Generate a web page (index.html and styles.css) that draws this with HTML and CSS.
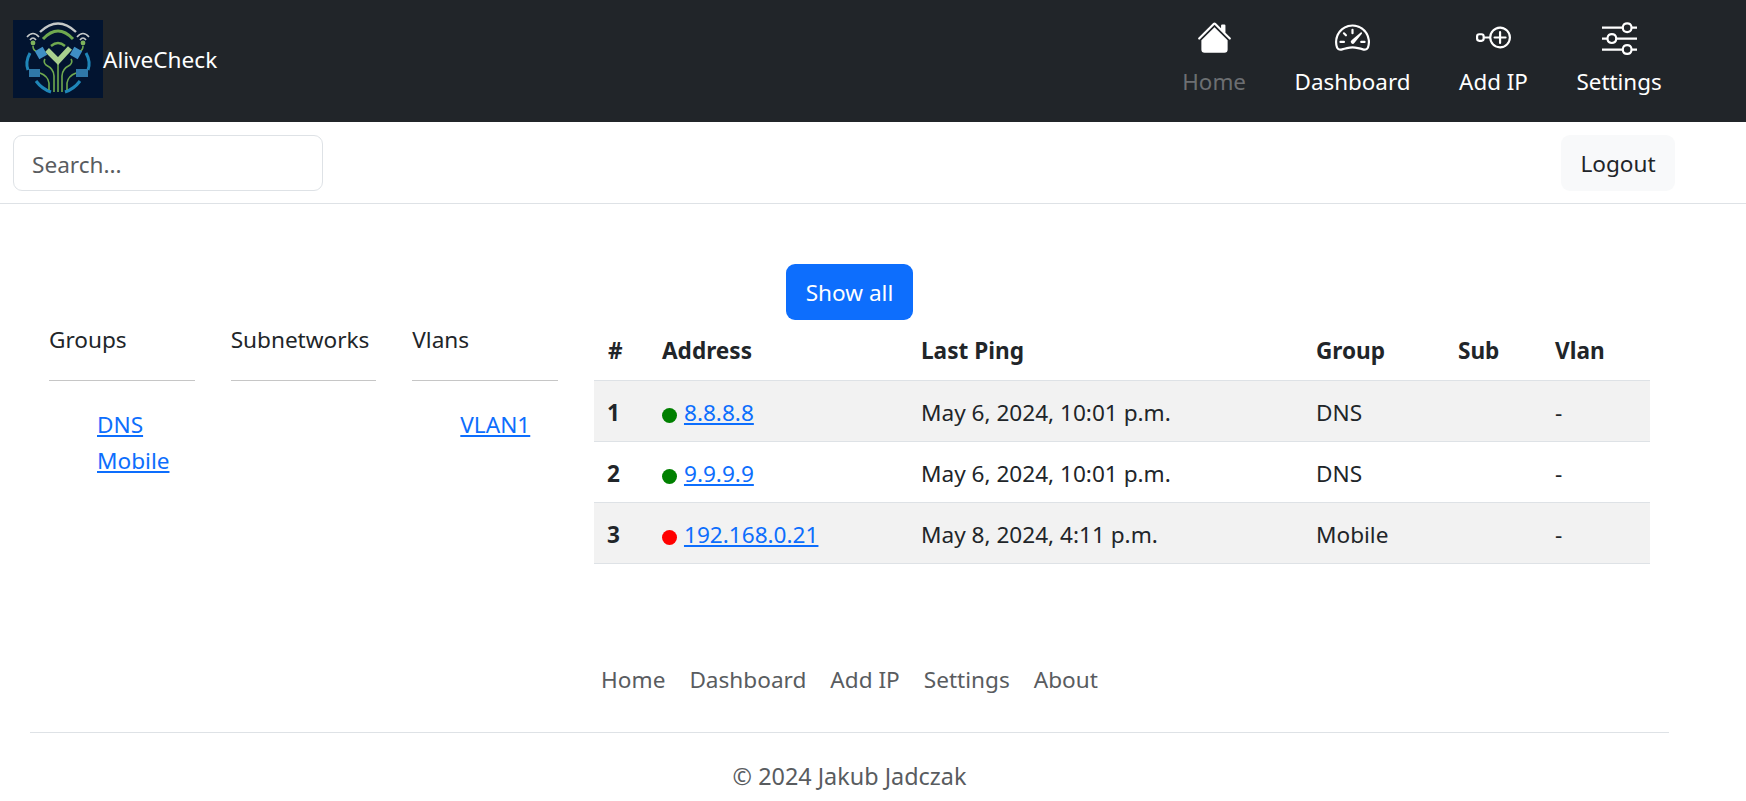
FILE: index.html
```html
<!DOCTYPE html>
<html lang="en">
<head>
    <meta charset="UTF-8">
    <title>AliveCheck</title>
    <link rel="stylesheet" href="styles.css">
</head>
<body>
    <header class="navbar">
        <a class="brand" href="#">
            <svg class="brand-logo" viewBox="0 0 90 78">
                <rect width="90" height="78" fill="#021430"/>
                <!-- top arcs -->
                <path d="M27 12 Q45 -5 63 12" fill="none" stroke="#c4c8c8" stroke-width="2.4"/>
                <path d="M30 19 Q45 3 60 19" fill="none" stroke="#6fa84f" stroke-width="3"/>
                <path d="M38 26 Q45 20 52 26" fill="none" stroke="#6fa84f" stroke-width="2.4"/>
                <!-- side wifi -->
                <path d="M14 17 Q20 10 26 17 M17 20 Q20 16 23 20 M64 17 Q70 10 76 17 M67 20 Q70 16 73 20" fill="none" stroke="#c4c8c8" stroke-width="1.6"/>
                <circle cx="20" cy="23" r="2.4" fill="#7fb35c"/>
                <circle cx="70" cy="23" r="2.4" fill="#7fb35c"/>
                <!-- ring -->
                <path d="M17 33 Q12 42 15 50 M23 61 Q29 69 38 72 M73 33 Q78 42 75 50 M67 61 Q61 69 52 72" fill="none" stroke="#1f86b8" stroke-width="3"/>
                <!-- circuit stems -->
                <path d="M45 44 V72 M41 72 V56 Q41 49 33 45 Q30 42 32 39 M49 72 V56 Q49 49 57 45 Q60 42 58 39 M36 70 V63 Q35 56 27 53 M54 70 V63 Q55 56 63 53 M20 26 Q20 30 23 31 M70 26 Q70 30 67 31" fill="none" stroke="#6fa84f" stroke-width="1.6"/>
                <!-- check -->
                <path d="M34 30 L45 41 L57 28" fill="none" stroke="#a9d08e" stroke-width="5.5"/>
                <!-- chips -->
                <rect x="23.5" y="28.5" width="9" height="9" fill="#3f8fc4" transform="rotate(-30 28 33)"/>
                <rect x="58.5" y="28.5" width="9" height="9" fill="#3f8fc4" transform="rotate(30 63 33)"/>
                <rect x="16" y="49" width="11" height="8" fill="#2f78a8"/>
                <rect x="63" y="49" width="12" height="8" fill="#2f78a8"/>
            </svg>
            <span>AliveCheck</span>
        </a>
        <nav class="nav-icons">
            <a class="nav-item active" href="#">
                <svg viewBox="0 0 16 16" fill="currentColor" class="icon-white"><path d="M8.707 1.5a1 1 0 0 0-1.414 0L.646 8.146a.5.5 0 0 0 .708.708L8 2.207l6.646 6.647a.5.5 0 0 0 .708-.708L13 5.793V2.5a.5.5 0 0 0-.5-.5h-1a.5.5 0 0 0-.5.5v1.293L8.707 1.5Z"/><path d="m8 3.293 6 6V13.5a1.5 1.5 0 0 1-1.5 1.5h-9A1.5 1.5 0 0 1 2 13.5V9.293l6-6Z"/></svg>
                <span>Home</span>
            </a>
            <a class="nav-item" href="#">
                <svg viewBox="0 0 16 16" fill="currentColor"><path d="M8 4a.5.5 0 0 1 .5.5V6a.5.5 0 0 1-1 0V4.5A.5.5 0 0 1 8 4zM3.732 5.732a.5.5 0 0 1 .707 0l.915.914a.5.5 0 1 1-.708.708l-.914-.915a.5.5 0 0 1 0-.707zM2 10a.5.5 0 0 1 .5-.5h1.586a.5.5 0 0 1 0 1H2.5A.5.5 0 0 1 2 10zm9.5 0a.5.5 0 0 1 .5-.5h1.5a.5.5 0 0 1 0 1H12a.5.5 0 0 1-.5-.5zm.754-4.246a.389.389 0 0 0-.527-.02L7.547 9.31a.91.91 0 1 0 1.302 1.258l3.434-4.297a.389.389 0 0 0-.029-.518z"/><path fill-rule="evenodd" d="M0 10a8 8 0 1 1 15.547 2.661c-.442 1.253-1.845 1.602-2.932 1.25C11.309 13.488 9.475 13 8 13c-1.474 0-3.31.488-4.615.911-1.087.352-2.49.003-2.932-1.25A7.988 7.988 0 0 1 0 10zm8-7a7 7 0 0 0-6.603 9.329c.203.575.923.876 1.68.63C4.397 12.533 6.358 12 8 12s3.604.532 4.923.96c.757.245 1.477-.056 1.68-.631A7 7 0 0 0 8 3z"/></svg>
                <span>Dashboard</span>
            </a>
            <a class="nav-item" href="#">
                <svg viewBox="0 0 16 16" fill="currentColor"><path fill-rule="evenodd" d="M11 4a4 4 0 1 0 0 8 4 4 0 0 0 0-8zM6.025 7.5a5 5 0 1 1 0 1H4A1.5 1.5 0 0 1 2.5 10h-1A1.5 1.5 0 0 1 0 8.5v-1A1.5 1.5 0 0 1 1.5 6h1A1.5 1.5 0 0 1 4 7.5h2.025zM11 5a.5.5 0 0 1 .5.5v2h2a.5.5 0 0 1 0 1h-2v2a.5.5 0 0 1-1 0v-2h-2a.5.5 0 0 1 0-1h2v-2A.5.5 0 0 1 11 5zM1.5 7a.5.5 0 0 0-.5.5v1a.5.5 0 0 0 .5.5h1a.5.5 0 0 0 .5-.5v-1a.5.5 0 0 0-.5-.5h-1z"/></svg>
                <span>Add IP</span>
            </a>
            <a class="nav-item" href="#">
                <svg viewBox="0 0 16 16" fill="currentColor"><path fill-rule="evenodd" d="M11.5 2a1.5 1.5 0 1 0 0 3 1.5 1.5 0 0 0 0-3zM9.05 3a2.5 2.5 0 0 1 4.9 0H16v1h-2.05a2.5 2.5 0 0 1-4.9 0H0V3h9.05zM4.5 7a1.5 1.5 0 1 0 0 3 1.5 1.5 0 0 0 0-3zM2.05 8a2.5 2.5 0 0 1 4.9 0H16v1H6.95a2.5 2.5 0 0 1-4.9 0H0V8h2.05zm9.45 4a1.5 1.5 0 1 0 0 3 1.5 1.5 0 0 0 0-3zm-2.45 1a2.5 2.5 0 0 1 4.9 0H16v1h-2.05a2.5 2.5 0 0 1-4.9 0H0v-1h9.05z"/></svg>
                <span>Settings</span>
            </a>
        </nav>
    </header>

    <div class="toolbar">
        <input class="search" type="text" placeholder="Search...">
        <button class="logout" type="button">Logout</button>
    </div>

    <main class="content">
        <div class="show-row">
            <button class="show-all" type="button">Show all</button>
        </div>
        <div class="columns">
            <section class="side-col">
                <h2>Groups</h2>
                <ul>
                    <li><a href="#">DNS</a></li>
                    <li><a href="#">Mobile</a></li>
                </ul>
            </section>
            <section class="side-col">
                <h2>Subnetworks</h2>
                <ul></ul>
            </section>
            <section class="side-col">
                <h2>Vlans</h2>
                <ul>
                    <li><a href="#">VLAN1</a></li>
                </ul>
            </section>
            <table class="hosts">
                <thead>
                    <tr>
                        <th class="col-num">#</th>
                        <th class="col-address">Address</th>
                        <th class="col-ping">Last Ping</th>
                        <th class="col-group">Group</th>
                        <th class="col-sub">Sub</th>
                        <th>Vlan</th>
                    </tr>
                </thead>
                <tbody>
                    <tr>
                        <th>1</th>
                        <td><span class="dot up"></span><a href="#">8.8.8.8</a></td>
                        <td>May 6, 2024, 10:01 p.m.</td>
                        <td>DNS</td>
                        <td></td>
                        <td>-</td>
                    </tr>
                    <tr>
                        <th>2</th>
                        <td><span class="dot up"></span><a href="#">9.9.9.9</a></td>
                        <td>May 6, 2024, 10:01 p.m.</td>
                        <td>DNS</td>
                        <td></td>
                        <td>-</td>
                    </tr>
                    <tr>
                        <th>3</th>
                        <td><span class="dot down"></span><a href="#">192.168.0.21</a></td>
                        <td>May 8, 2024, 4:11 p.m.</td>
                        <td>Mobile</td>
                        <td></td>
                        <td>-</td>
                    </tr>
                </tbody>
            </table>
        </div>
    </main>

    <footer class="footer">
        <nav class="footer-links">
            <a href="#">Home</a>
            <a href="#">Dashboard</a>
            <a href="#">Add IP</a>
            <a href="#">Settings</a>
            <a href="#">About</a>
        </nav>
        <p class="copyright">© 2024 Jakub Jadczak</p>
    </footer>
</body>
</html>
```

FILE: styles.css
```css
* {
    box-sizing: border-box;
}

body {
    margin: 0;
    font-family: "Noto Sans", "Open Sans", sans-serif;
    font-size: 22.6px;
    line-height: 33px;
    color: #212529;
    background-color: #ffffff;
}

a {
    color: #0d6efd;
}

.navbar {
    display: flex;
    justify-content: space-between;
    align-items: center;
    height: 122px;
    padding: 0 60px 0 13px;
    background-color: #212529;
}

.brand {
    display: flex;
    align-items: center;
    margin-bottom: 4px;
    color: #ffffff;
    text-decoration: none;
}

.brand-logo {
    width: 90px;
    height: 78px;
}

.nav-icons {
    display: flex;
    margin-bottom: 5px;
    font-size: 22.4px;
}

.nav-item {
    display: flex;
    flex-direction: column;
    align-items: center;
    gap: 10px;
    padding: 0 24.3px;
    color: #ffffff;
    text-decoration: none;
}

.nav-item svg {
    width: 35px;
    height: 35px;
}

.nav-item.active {
    color: rgba(255, 255, 255, 0.35);
}

.nav-item .icon-white {
    color: #ffffff;
}

.toolbar {
    display: flex;
    justify-content: space-between;
    height: 82px;
    padding: 13px 71px 13px 13px;
    border-bottom: 1px solid #dee2e6;
}

.search {
    width: 310px;
    height: 56px;
    padding: 2px 18px 0;
    font: inherit;
    color: #212529;
    border: 1px solid #dee2e6;
    border-radius: 9px;
}

.search::placeholder {
    color: #595c5f;
}

.logout {
    width: 114px;
    height: 56px;
    padding-top: 2px;
    font: inherit;
    color: #212529;
    background-color: #f8f9fa;
    border: none;
    border-radius: 9px;
}

.content {
    padding: 60px 0 0 49px;
}

.show-row {
    padding-left: 737px;
}

.show-all {
    display: block;
    width: 127px;
    height: 56px;
    font: inherit;
    color: #ffffff;
    background-color: #0d6efd;
    border: none;
    border-radius: 9px;
}

.columns {
    display: flex;
    align-items: flex-start;
}

.side-col {
    width: 145.67px;
    margin-right: 36px;
}

.side-col h2 {
    height: 61px;
    margin: 0;
    padding-top: 3px;
    font-size: inherit;
    font-weight: 400;
    border-bottom: 1px solid #c6c6c6;
}

.side-col ul {
    margin: 27px 0 0;
    padding-left: 48px;
    list-style: none;
}

.side-col li {
    height: 36px;
}

.hosts {
    width: 1056px;
    border-collapse: collapse;
    table-layout: fixed;
}

.hosts th,
.hosts td {
    height: 61px;
    padding: 3px 14px 0;
    text-align: left;
    border-bottom: 1px solid #dee2e6;
}

.hosts thead th {
    height: 60px;
    padding-top: 14px;
    vertical-align: top;
}

.hosts tbody tr:nth-child(odd) {
    background-color: #f2f2f2;
}

.hosts tbody th {
    padding-left: 13px;
}

.col-num {
    width: 54px;
}

.col-address {
    width: 259px;
}

.col-ping {
    width: 395px;
}

.col-group {
    width: 142px;
}

.col-sub {
    width: 97px;
}

.dot {
    display: inline-block;
    width: 15px;
    height: 15px;
    margin-right: 7px;
    vertical-align: -2px;
    border-radius: 50%;
}

.dot.up {
    background-color: #008000;
}

.dot.down {
    background-color: #ff0000;
}

.footer {
    margin-top: 99px;
    padding: 0 30px;
}

.footer-links {
    display: flex;
    justify-content: center;
    gap: 24px;
    width: 1639px;
    padding-bottom: 36px;
    border-bottom: 1px solid #dee2e6;
}

.footer-links a {
    color: #595c5f;
    text-decoration: none;
}

.copyright {
    width: 1639px;
    margin: 27px 0 0;
    font-size: 23.4px;
    text-align: center;
    color: #595c5f;
}
```
